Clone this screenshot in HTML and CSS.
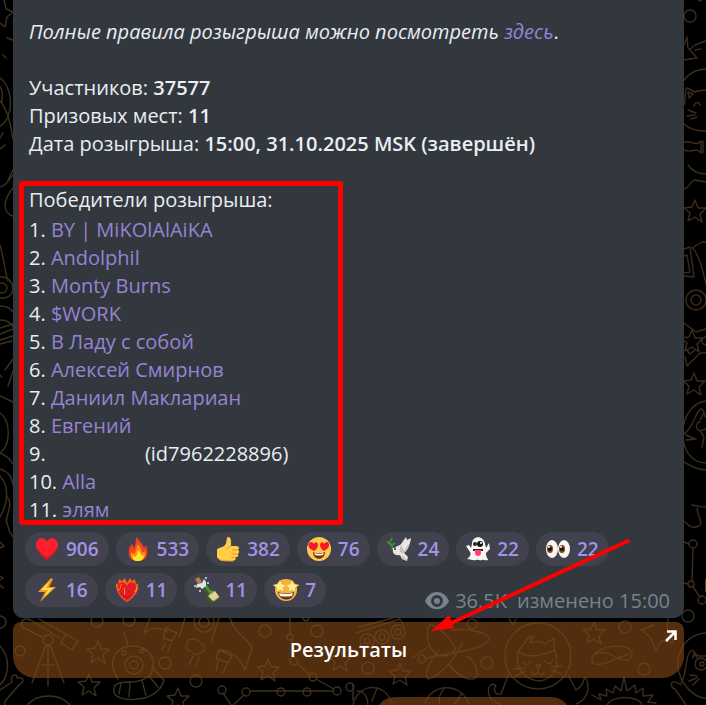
FILE: index.html
```
<!DOCTYPE html>
<html lang="ru">
<head>
  <meta charset="UTF-8">
  <meta name="viewport" content="width=device-width, initial-scale=1">
  <title>Розыгрыш</title>
  <link rel="stylesheet" href="styles.css">
</head>
<body>

  <!-- Узор чата -->
  <svg class="wallpaper" viewBox="0 0 706 705" preserveAspectRatio="xMidYMin slice" aria-hidden="true">
    <defs>
      <path id="star" d="M0-11 3-3 11-3 5 3 7 11 0 6-7 10-5 2-11-3-3-4Z"/>
    </defs>
    <g class="doodle doodle-left">
      <path d="M4 0 6 9 13 12 7 17 5 27 0 23M7 38 13 40M3 55 6 58"/>
      <path d="M0 78C14 88 14 119 0 126M0 87C5 92 1 98 2 104M0 101C9 112 11 128 13 139M0 138 3 133M0 149 5 145M8 180 13 170"/>
      <path d="M0 187C9 184 9 178 13 175M13 188C3 200 2 212 13 216M0 245C4 258 5 273 8 281"/>
      <circle cx="2" cy="288" r="5"/><path d="M0 277C17 276 17 301 0 298M0 306C8 306 11 309 13 312M0 320C8 320 12 324 13 327M0 328 13 324M0 334 13 329M0 340 13 336M0 344 12 341"/>
      <path d="M5 370 13 359M8 386 13 371M0 375 2 377M0 396 13 402M0 413C11 421 11 445 0 453 5 455 10 459 13 464M0 469C8 471 12 477 13 485M0 476C12 489 5 509 0 517M6 496C16 505 2 518 8 526 9 533 12 535 13 537M0 542 4 546 0 548M0 576 3 578 0 580M0 585 3 588"/>
      <circle cx="0" cy="622" r="6"/><path d="M0 646C11 658 9 676 0 685M0 690 12 682C9 674 18 673 17 678 26 676 23 684 20 684L5 701V705"/>
      <!-- телескоп -->
      <circle cx="48" cy="640" r="5"/><path d="M46 645 32 683M48 645V686M50 645 64 683M42 637 22 627C20 621 25 617 29 620M29 619 61 639M39 619 78 641 72 650 61 643 66 634M42 665 54 665"/>
      <circle cx="20" cy="651" r="5"/><circle cx="97" cy="621" r="6"/><circle cx="129" cy="620" r="6"/>
      <use href="#star" x="98" y="652"/><use href="#star" x="89" y="685"/><use href="#star" x="178" y="699"/>
      <!-- пришелец в тарелке -->
      <path d="M124 632 128 646M118 679C105 659 118 646 132 646 149 646 159 660 150 675M114 692C112 682 123 682 130 682 145 682 155 673 152 667L164 680C160 695 144 699 137 699 124 701 115 697 114 692ZM121 683 119 694M130 683 129 697M142 681 146 695M149 676 158 687"/>
      <circle cx="134" cy="665" r="9"/><circle cx="134" cy="665" r="4"/><circle cx="124" cy="653" r="2"/><circle cx="142" cy="651" r="2"/><circle cx="165" cy="663" r="6"/><circle cx="196" cy="681" r="6"/>
      <path d="M27 705C38 693 60 693 70 705"/>
      <!-- ракета -->
      <path d="M150 618 144 633C154 626 162 628 168 632M166 628 177 633 172 641 163 638ZM165 643 162 650M171 644 168 652M185 618 179 637M219 618 211 642M230 618C235 636 251 640 252 648L245 670C238 653 226 650 219 650M187 641C196 635 204 644 205 650L197 655 186 649ZM219 650 232 656 228 663 216 658ZM193 656 189 665M199 657 196 667M218 661 216 671M227 664 223 673"/>
      <circle cx="204" cy="622" r="10"/><circle cx="204" cy="622" r="5"/>
      <circle cx="265" cy="631" r="6"/><circle cx="317" cy="631" r="6"/><use href="#star" x="268" y="670"/>
      <!-- созвездие -->
      <path d="M290 618V634M292 640 294 658M297 663 310 675M316 679 334 689M333 691H250M244 695 233 705M223 693 231 705M303 618C304 622 308 622 309 618M353 684V700"/>
      <circle cx="290" cy="637" r="3"/><circle cx="294" cy="661" r="4"/><circle cx="313" cy="677" r="4"/><circle cx="337" cy="691" r="4"/><circle cx="307" cy="692" r="4"/><circle cx="281" cy="692" r="4"/><circle cx="246" cy="692" r="4"/><circle cx="222" cy="690" r="4"/><circle cx="350" cy="687" r="4"/>
      <use href="#star" x="340" y="660"/>
    </g>
    <g class="doodle doodle-right">
      <!-- луноход и спутник -->
      <circle cx="367" cy="641" r="7"/><circle cx="382" cy="637" r="7"/><circle cx="398" cy="632" r="7"/><circle cx="367" cy="641" r="3"/><circle cx="382" cy="637" r="3"/><circle cx="398" cy="632" r="3"/>
      <path d="M356 633 400 619 404 626M359 627 393 618M430 624C421 642 437 668 455 650M430 624C443 630 452 640 456 650M452 630C470 628 497 634 487 642 479 650 448 654 424 658M463 642C455 659 440 676 428 679 424 677 429 660 439 650M449 664C458 678 478 685 477 673 477 667 473 659 467 656M412 658 428 647"/>
      <circle cx="472" cy="624" r="5"/><circle cx="422" cy="659" r="4"/><circle cx="487" cy="663" r="6"/><circle cx="368" cy="668" r="6"/><use href="#star" x="400" y="674"/>
      <!-- кот в шлеме -->
      <circle cx="538" cy="656" r="33"/>
      <path d="M518 652C515 670 525 680 540 681 554 679 561 667 554 647V638L545 644C541 641 536 641 532 643L530 636 522 646ZM518 652C530 659 543 655 555 650M530 642 534 636M523 662C526 666 529 665 531 661M545 661C547 665 552 664 553 660M536 665 541 665 538 669ZM538 669V673C535 676 532 674 532 672M538 673C542 676 544 674 544 672M514 669 525 668M515 676 526 671M551 667 562 666M551 670 562 674M509 673 501 694C493 695 494 688 496 686 491 680 485 690 491 699L501 705M568 675 576 690C587 684 581 678 586 678 592 692 584 701 576 704M509 619 513 625 516 619"/>
      <path d="M594 654C607 643 629 645 632 652 633 664 620 661 612 655 603 650 590 653 592 661 596 671 617 657 629 654"/>
      <use href="#star" x="594" y="633"/><circle cx="625" cy="627" r="6"/><circle cx="644" cy="669" r="6"/><path d="M654 625 641 630 650 637 656 650 661 641 674 642 667 630 668 619"/>
      <!-- солнце -->
      <path d="M592 695 601 700 599 694 607 696 606 689 613 693 615 686 621 691 624 677 627 691 635 685 636 693 643 688 643 696 653 695 648 702 656 703M607 705C612 695 639 695 642 705M353 705C357 684 383 681 391 701M357 691C365 691 368 698 368 705M377 688 372 701M425 703C431 684 461 681 469 704M445 688C440 692 438 699 440 705M462 693 454 705"/>
      <circle cx="690" cy="16" r="6"/><path d="M698 0 701 1M684 45 687 37 688 48 697 58 684 60M690 49 694 46M695 50 701 49M695 45 706 41M684 80C690 72 699 69 706 69M684 124C690 130 698 131 706 131M684 105C686 101 684 91 687 88L695 92C699 90 703 91 706 90M689 98 688 92 693 94ZM694 106C695 101 699 102 700 105M688 110 696 113M687 116 695 115M691 119 697 117"/>
      <path d="M684 142C691 140 696 147 701 141V153C695 146 693 154 684 150M703 141V153M688 165C693 172 699 174 706 174M684 189C690 187 691 180 695 180L706 182"/>
      <use href="#star" x="695" y="211"/>
      <path d="M684 249 690 247 694 277 684 276M684 256 687 255 690 272 684 273M692 248 702 242 706 242M692 248C698 252 703 270 706 284"/>
      <circle cx="696" cy="300" r="10"/><circle cx="696" cy="300" r="5"/><path d="M684 323 696 332 706 329"/><use href="#star" x="692" y="341"/><circle cx="706" cy="341" r="4"/>
      <path d="M685 357 687 366 700 353H706M687 350 690 354 695 350"/><use href="#star" x="694" y="384"/>
      <path d="M706 401C675 405 675 463 706 463M706 470C696 470 689 465 684 462M684 434C693 429 695 412 701 409 705 410 704 416 706 417M706 429C694 435 695 421 700 422M700 420 704 413M700 431 704 437 702 447M686 435 695 439M686 440 696 439M692 505C704 507 700 507 706 507M697 508C697 516 704 523 699 526 690 530 688 524 684 521"/>
      <circle cx="693" cy="544" r="4"/><circle cx="691" cy="584" r="3"/><circle cx="702" cy="600" r="4"/><path d="M693 548 692 581M693 587 700 597M684 542 689 544M684 583 688 584"/><circle cx="688" cy="616" r="6"/>
      <path d="M706 633C681 635 671 661 683 682 691 694 699 698 706 698M681 683C688 673 684 655 692 650L698 656H706M693 658 694 653 697 658M690 675 697 676M689 681 697 678M693 685 699 679M681 685 676 682C669 681 671 688 675 689L686 705"/>
      <circle cx="701" cy="664" r="6"/><circle cx="702" cy="664" r="2"/>
    </g>
    <path class="share-edge" d="M705 579h1v13h-1z"/>
  </svg>

  <main class="chat">
    <article class="message">
      <p class="rules"><em>Полные правила розыгрыша можно посмотреть <a href="#">здесь</a></em>.</p>

      <p>
        Участников: <b>37577</b><br>
        Призовых мест: <b>11</b><br>
        Дата розыгрыша: <b>15:00, 31.10.2025 MSK (завершён)</b>
      </p>

      <section class="winners">
        <p>Победители розыгрыша:</p>
        <ol>
          <li>1. <a href="#">BY | MiKOlAlAiKA</a></li>
          <li>2. <a href="#">Andolphil</a></li>
          <li>3. <a href="#">Monty Burns</a></li>
          <li>4. <a href="#">$WORK</a></li>
          <li>5. <a href="#">В Ладу с собой</a></li>
          <li>6. <a href="#">Алексей Смирнов</a></li>
          <li>7. <a href="#">Даниил Маклариан</a></li>
          <li>8. <a href="#">Евгений</a></li>
          <li>9. <span class="user-id">(id7962228896)</span></li>
          <li>10. <a href="#">Alla</a></li>
          <li>11. <a href="#">элям</a></li>
        </ol>
      </section>

      <footer class="reactions">
        <button class="reaction" type="button">
          <svg viewBox="0 0 24 24"><path fill="#ff202b" d="M12 23C8 20 1 14 1 8 1 0 10-1 12 5 14-1 23 0 23 8 23 14 16 20 12 23Z"/><path fill="#d91522" d="M12 23C8 20 2 15 1 9 5 16 9 18 12 20 15 18 20 15 23 9 22 15 16 20 12 23Z"/></svg>
          906
        </button>
        <button class="reaction" type="button">
          <svg viewBox="0 0 24 24"><path fill="#f3421f" d="M12 24C5 24 2 20 3 14 3 10 5 8 6 7L8 11C10 8 9 3 11 0 13 4 17 7 18 11L20 8C21 12 22 15 21 18 20 22 16 24 12 24Z"/><path fill="#ff8b16" d="M12 24C6 24 4 20 5 15L8 17C11 14 10 9 12 7 14 10 16 13 16 16L19 14C21 19 17 24 12 24Z"/><path fill="#ffe529" d="M12 24C8 24 6 22 7 18L9 20C12 18 11 15 12 13 15 16 15 18 16 19L18 18C18 22 15 24 12 24Z"/></svg>
          533
        </button>
        <button class="reaction" type="button">
          <svg viewBox="0 0 24 24"><path fill="#ffcd46" d="M1 13C2 10 6 11 8 9 11 7 10 4 11 1 12-1 15 0 15 4L15 9 21 9C24 10 23 12 22 13 24 14 23 16 22 17 23 19 22 20 20 20 20 23 18 24 16 24H8C4 24 2 22 1 20Z"/><path fill="none" stroke="#e89b25" stroke-width="1" d="M15 9C13 10 11 10 11 12M22 13H16M22 17H16M20 20.500H15M2 21C4 24 10 24 17 24"/></svg>
          382
        </button>
        <button class="reaction" type="button">
          <svg viewBox="0 0 24 24"><circle cx="12" cy="12" r="12" fill="#ffc94c"/><path fill="#f51b2c" d="M7 14C3 12 0 10 2 6 4 4 6 5 7 7 8 4 11 5 11 8 11 10 9 13 7 14ZM17 14C15 13 13 10 13 8 13 5 16 4 17 7 18 5 21 4 22 7 23 10 20 12 17 14Z"/><path fill="#68301d" d="M6 15Q12 18 18 15C18 24 6 24 6 15Z"/><path fill="#fff" d="M7 16Q12 18 17 16L16 18Q12 19 8 18Z"/></svg>
          76
        </button>
        <button class="reaction" type="button">
          <svg viewBox="0 0 24 24"><path fill="#e9e7df" d="M8 11C10 8 13 9 14 7L19 0 20 3 24 1C23 8 21 13 17 16L21 20 20 24 15 22 13 18C8 19 5 16 6 12L4 11Z"/><path fill="#c3bfb6" d="M14 8 17 14 23 5C21 11 20 14 17 16 12 17 12 12 14 8ZM15 18 20 23 16 22Z"/><path fill="none" stroke="#438c2d" stroke-width="2" d="M6 11 2 4M3 7 0 5M4 4 5 1M5 8 8 6"/><circle cx="8" cy="12" r="1" fill="#333"/></svg>
          24
        </button>
        <button class="reaction" type="button">
          <svg viewBox="0 0 24 24"><path fill="#f7f6f1" d="M6 7C6-2 18-2 19 7L20 11 23 6 24 12 20 16C20 21 22 21 22 23 19 24 17 22 16 23 14 24 12 22 10 23 7 24 5 22 1 22 5 19 5 17 4 15L0 9 3 8 5 11Z"/><circle cx="9" cy="7" r="2" fill="#222"/><circle cx="14" cy="7" r="3" fill="#151515"/><circle cx="15" cy="6" r="1" fill="#fff"/><path fill="#3a2633" d="M7 12H17V14H7Z"/><path fill="#ff4379" d="M9 13H15V16C15 20 9 20 9 16Z"/></svg>
          22
        </button>
        <button class="reaction" type="button">
          <svg viewBox="0 0 24 24"><g fill="#f8f5ee"><ellipse cx="6" cy="12" rx="6" ry="9"/><ellipse cx="18" cy="12" rx="6" ry="9"/></g><g fill="#79451e"><ellipse cx="4" cy="12" rx="3" ry="4"/><ellipse cx="16" cy="12" rx="3" ry="4"/></g><circle cx="4" cy="12" r="2" fill="#17110d"/><circle cx="16" cy="12" r="2" fill="#17110d"/><circle cx="3" cy="10" r="1" fill="#fff"/><circle cx="15" cy="10" r="1" fill="#fff"/></svg>
          22
        </button>
        <button class="reaction" type="button">
          <svg viewBox="0 0 24 24"><path fill="#f49b14" d="M16 0 3 14H10L5 24 21 9H14L18 1Z"/><path fill="#ffe064" d="M15 3 6 12H13L9 19 18 10H11Z"/></svg>
          16
        </button>
        <button class="reaction" type="button">
          <svg viewBox="0 0 24 24"><path fill="#f4651c" d="M12 24C7 21 0 14 1 5L3 7 4 1 7 3 10 0 12 5 15 0 17 3 20 1 21 7 23 5C25 14 17 21 12 24Z"/><path fill="#e51b26" d="M12 23C7 19 2 15 3 8 4 2 10 4 12 8 14 3 20 3 21 8 22 15 17 19 12 23Z"/><path fill="none" stroke="#ffa126" stroke-width="1" d="M3 12C7 11 4 8 7 6M9 17C11 14 8 12 10 10M20 14 22 10"/><path fill="none" stroke="#b80f24" d="M6 15 12 20 15 17M13 13 15 15"/></svg>
          11
        </button>
        <button class="reaction" type="button">
          <svg viewBox="0 0 24 24"><path fill="#578f2c" d="M9 10 13 7 16 12C21 12 23 15 26 19L19 25C15 23 12 20 13 16Z"/><path fill="#315f1d" d="M9 10 11 9 15 15C15 19 18 22 21 24L19 25C15 23 12 20 13 16Z"/><path fill="#e6cf98" d="M14 18 21 13 25 19 19 23Z"/><path fill="#b87c3d" d="M1 1 5-1 8 4 4 6Z"/><g fill="#e1e4e6"><path d="M3 6 8 5 10 1 12 4 12 8 8 11 6 9 2 10Z"/><circle cx="1" cy="8" r="1"/><circle cx="6" cy="13" r="1"/><circle cx="12" cy="0" r="1"/><circle cx="14" cy="5" r="1"/></g></svg>
          11
        </button>
        <button class="reaction" type="button">
          <svg viewBox="0 0 24 24"><circle cx="12" cy="12" r="11" fill="#f7b43c"/><path fill="#fff18a" stroke="#d69b29" stroke-width=".5" d="M6 2 8 6 12 7 9 10 10 14 6 12 2 14 3 10-1 7 4 6ZM18 2 20 6 25 7 21 10 22 14 18 12 14 14 15 10 12 7 16 6Z"/><path fill="#6b301d" d="M4 14Q12 17 20 14C20 24 5 24 4 14Z"/><path fill="#fff" d="M5 15Q12 17 19 15L18 18Q12 19 6 18Z"/></svg>
          7
        </button>

        <div class="meta">
          <svg class="eye" viewBox="0 0 24 18"><path fill="currentColor" fill-rule="evenodd" d="M0 9C5-3 19-3 24 9 19 20 5 20 0 9ZM12 3A6 6 0 1 0 12 15 6 6 0 1 0 12 3Z"/><circle cx="12" cy="9" r="3" fill="currentColor"/></svg>
          <span class="views">36.5K</span>
          <span>изменено 15:00</span>
        </div>
      </footer>
    </article>

    <button class="results" type="button">
      Результаты
      <svg class="corner" viewBox="0 0 12 12"><path d="M2 1.500H10.500V10M10 2 1 11"/></svg>
    </button>

    <div class="next-day"></div>

    <!-- стрелка к кнопке -->
    <svg class="pointer" viewBox="0 0 200 94" aria-hidden="true">
      <path d="M197 2 18 85" stroke="#f00" stroke-width="4" stroke-linecap="round"/>
      <path d="M0 92 18 76 23 89Z" fill="#f00"/>
    </svg>
  </main>

</body>
</html>
```
FILE: styles.css
```
* {
  box-sizing: border-box;
}

body {
  margin: 0;
  height: 100vh;
  overflow: hidden;
  background: #000;
  color: #e8eef1;
  font-family: "Open Sans", "Noto Sans", sans-serif;
  font-size: 20px;
  line-height: 28px;
}

a {
  color: #9683d2;
  text-decoration: none;
}

b {
  font-weight: 600;
}

button {
  border: 0;
  font: inherit;
  cursor: pointer;
}

/* Узор */
.wallpaper {
  position: absolute;
  top: 0;
  left: 0;
  width: 100%;
  height: 100%;
}

.doodle {
  fill: none;
  stroke-width: 1.4;
  stroke-linecap: round;
  stroke-linejoin: round;
}

.doodle-left {
  stroke: #3b321e;
}

.doodle-right {
  stroke: #3c2d1d;
}

.share-edge {
  fill: #6e3b0c;
}

.chat {
  position: relative;
  padding: 0 22px 0 13px;
}

/* Сообщение */
.message {
  padding: 18px 14px 11px 16px;
  background: #33383f;
  border-radius: 0 0 10px 10px;
}

.message p {
  margin: 0 0 28px;
}

.winners {
  position: relative;
  margin-bottom: 8px;
}

.winners::after {
  content: "";
  position: absolute;
  top: -5px;
  bottom: -1px;
  left: -10px;
  box-sizing: border-box;
  width: 324px;
  border: 5px solid #f00;
  border-radius: 3px;
}

.message .winners p {
  margin: 0 0 2px;
}

.winners ol {
  margin: 0;
  padding: 0;
  list-style: none;
}

.user-id {
  margin-left: 94px;
}

/* Реакции */
.reactions {
  display: flex;
  flex-wrap: wrap;
  gap: 7px;
  margin-left: -4px;
}

.reaction {
  display: flex;
  align-items: center;
  gap: 7px;
  height: 34px;
  padding: 0 10px;
  border-radius: 17px;
  background: #42424f;
  color: #a193e5;
  font-size: 19px;
  font-weight: 600;
}

.reaction svg {
  width: 24px;
  height: 24px;
  overflow: visible;
}

.meta {
  display: flex;
  align-items: center;
  align-self: flex-end;
  margin: 0 0 -4px auto;
  color: #78838d;
  line-height: 20px;
}

.eye {
  width: 24px;
  height: 18px;
  margin-right: 6px;
}

.views {
  margin-right: 10px;
}

/* Кнопка под сообщением */
.results {
  position: relative;
  display: block;
  width: 100%;
  height: 56px;
  margin-top: 4px;
  border-radius: 8px 8px 22px 22px;
  background: rgba(132, 73, 22, 0.62);
  color: #fff;
  font-weight: 600;
}

.corner {
  position: absolute;
  top: 8px;
  right: 7px;
  width: 12px;
  height: 12px;
  fill: none;
  stroke: #fff;
  stroke-width: 2.5;
}

.next-day {
  width: 196px;
  height: 40px;
  margin: 19px 0 0 54%;
  border-radius: 20px;
  background: rgba(132, 73, 22, 0.62);
}

.pointer {
  position: absolute;
  top: 539px;
  left: 431px;
  width: 200px;
  height: 94px;
  pointer-events: none;
}
```
